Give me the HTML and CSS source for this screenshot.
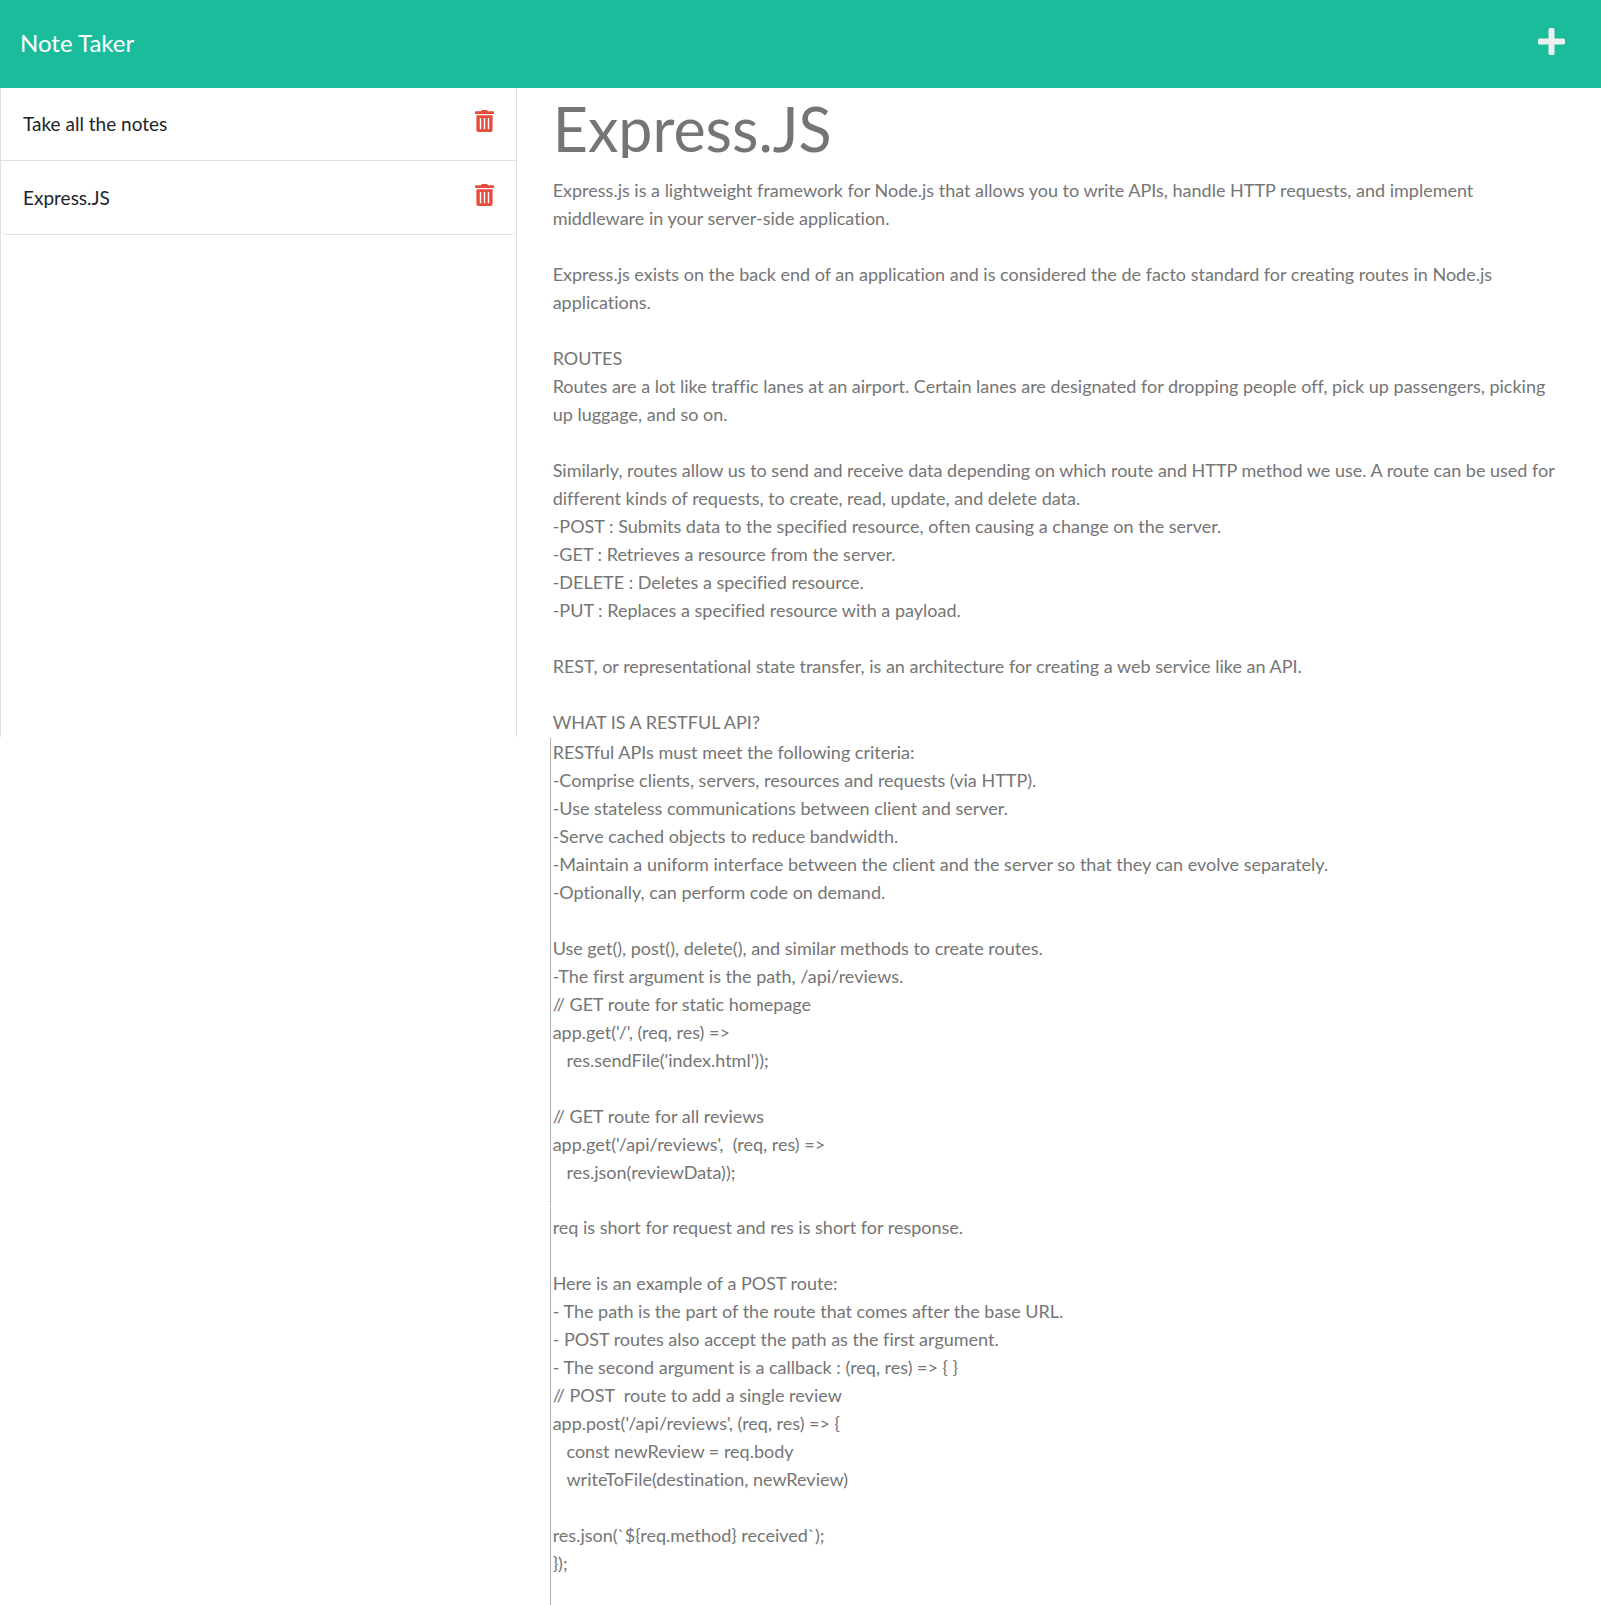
FILE: index.html
```html
<!DOCTYPE html>
<html lang="en">
<head>
  <meta charset="utf-8">
  <meta name="viewport" content="width=device-width, initial-scale=1">
  <title>Note Taker</title>
  <link rel="stylesheet" href="styles.css">
</head>
<body>
  <nav class="navbar">
    <a class="brand" href="#">Note Taker</a>
    <button class="icon-button new-note" type="button" aria-label="New note">
      <svg width="27" height="27" viewBox="0 0 27 27" fill="currentColor" aria-hidden="true">
        <path d="M12 0h3a1.500 1.500 0 0 1 1.500 1.500V10.500H25.500A1.500 1.500 0 0 1 27 12v3a1.500 1.500 0 0 1-1.500 1.500H16.500V25.500A1.500 1.500 0 0 1 15 27h-3a1.500 1.500 0 0 1-1.500-1.500V16.500H1.500A1.500 1.500 0 0 1 0 15v-3a1.500 1.500 0 0 1 1.500-1.500H10.500V1.500A1.500 1.500 0 0 1 12 0z"/>
      </svg>
    </button>
  </nav>

  <main class="layout">
    <aside class="sidebar">
      <ul class="note-list">
        <li class="note-item">
          <span>Take all the notes</span>
          <button class="icon-button delete-note" type="button" aria-label="Delete Take all the notes">
            <svg width="19" height="22" viewBox="0 0 19 22" fill="currentColor" aria-hidden="true">
              <path fill-rule="evenodd" d="M0.600 1.200H5.800L6.500 0.400Q6.800 0 7.300 0H11.700Q12.200 0 12.500 0.400L13.200 1.200H18.400Q19 1.200 19 1.800V3.400Q19 4 18.400 4H0.600Q0 4 0 3.400V1.800Q0 1.200 0.600 1.200zM1.400 5.200H17.600V20Q17.600 22 15.600 22H3.400Q1.400 22 1.400 20zM4.800 8V19.200H6.200V8zM8.800 8V19.200H10.200V8zM12.800 8V19.200H14.200V8z"/>
            </svg>
          </button>
        </li>
        <li class="note-item">
          <span>Express.JS</span>
          <button class="icon-button delete-note" type="button" aria-label="Delete Express.JS">
            <svg width="19" height="22" viewBox="0 0 19 22" fill="currentColor" aria-hidden="true">
              <path fill-rule="evenodd" d="M0.600 1.200H5.800L6.500 0.400Q6.800 0 7.300 0H11.700Q12.200 0 12.500 0.400L13.200 1.200H18.400Q19 1.200 19 1.800V3.400Q19 4 18.400 4H0.600Q0 4 0 3.400V1.800Q0 1.200 0.600 1.200zM1.400 5.200H17.600V20Q17.600 22 15.600 22H3.400Q1.400 22 1.400 20zM4.800 8V19.200H6.200V8zM8.800 8V19.200H10.200V8zM12.800 8V19.200H14.200V8z"/>
            </svg>
          </button>
        </li>
      </ul>
    </aside>

    <section class="note">
      <input class="note-title" type="text" value="Express.JS" aria-label="Note title" readonly>
      <textarea class="note-text" rows="20" aria-label="Note text" readonly>Express.js is a lightweight framework for Node.js that allows you to write APIs, handle HTTP requests, and implement middleware in your server-side application.

Express.js exists on the back end of an application and is considered the de facto standard for creating routes in Node.js applications.

ROUTES
Routes are a lot like traffic lanes at an airport. Certain lanes are designated for dropping people off, pick up passengers, picking up luggage, and so on.

Similarly, routes allow us to send and receive data depending on which route and HTTP method we use. A route can be used for different kinds of requests, to create, read, update, and delete data.
-POST : Submits data to the specified resource, often causing a change on the server.
-GET : Retrieves a resource from the server.
-DELETE : Deletes a specified resource.
-PUT : Replaces a specified resource with a payload.

REST, or representational state transfer, is an architecture for creating a web service like an API.

WHAT IS A RESTFUL API?</textarea>
    </section>

    <section class="note note-more">
      <textarea class="note-text ruled" rows="16" aria-label="Note text, RESTful APIs" readonly>RESTful APIs must meet the following criteria:
-Comprise clients, servers, resources and requests (via HTTP).
-Use stateless communications between client and server.
-Serve cached objects to reduce bandwidth.
-Maintain a uniform interface between the client and the server so that they can evolve separately.
-Optionally, can perform code on demand.

Use get(), post(), delete(), and similar methods to create routes.
-The first argument is the path, /api/reviews.
// GET route for static homepage
app.get('/', (req, res) =>
   res.sendFile('index.html'));

// GET route for all reviews
app.get('/api/reviews',  (req, res) =>
   res.json(reviewData));</textarea>
      <textarea class="note-text ruled last" rows="13" aria-label="Note text, POST routes" readonly>req is short for request and res is short for response.

Here is an example of a POST route:
- The path is the part of the route that comes after the base URL.
- POST routes also accept the path as the first argument.
- The second argument is a callback : (req, res) =&gt; { }
// POST  route to add a single review
app.post('/api/reviews', (req, res) =&gt; {
   const newReview = req.body
   writeToFile(destination, newReview)

res.json(`${req.method} received`);
});</textarea>
    </section>
  </main>
</body>
</html>
```
FILE: styles.css
```css
* {
  box-sizing: border-box;
}

body {
  margin: 0;
  min-height: 100vh;
  display: flex;
  flex-direction: column;
  background: #fff;
  color: #212529;
  font-family: Lato, "Open Sans", sans-serif;
  font-size: 19px;
  line-height: 28px;
  font-variant-ligatures: no-common-ligatures;
}

.navbar {
  display: flex;
  align-items: center;
  justify-content: space-between;
  padding: 27px 36px 33px 20px;
  background: #1abc9c;
}

.brand {
  padding-top: 4px;
  color: #fff;
  font-size: 24px;
  line-height: 24px;
  text-decoration: none;
}

.icon-button {
  display: block;
  padding: 0;
  border: 0;
  background: none;
  cursor: pointer;
}

.icon-button svg {
  display: block;
}

.new-note {
  height: 28px;
  color: #ecf0f1;
}

.delete-note {
  color: #e74c3c;
}

.layout {
  flex: 1;
  display: grid;
  grid-template-columns: minmax(0, 1fr) minmax(0, 2fr);
  grid-template-rows: auto 1fr;
  row-gap: 1px;
}

.sidebar {
  margin-right: 17px;
  border: solid #dfdfdf;
  border-width: 0 1px;
}

.note-list {
  margin: 0;
  padding: 0;
  list-style: none;
}

.note-item {
  display: flex;
  align-items: flex-start;
  justify-content: space-between;
  padding: 22px;
  border-bottom: 1px solid #dfdfdf;
}

.note-item + .note-item {
  padding-top: 23px;
}

.note-item:last-child {
  border-radius: 0 0 5px 5px;
}

.note {
  display: flex;
  flex-direction: column;
  gap: 18px;
  padding: 10px 42px 1px 16px;
}

.note-title,
.note-text {
  display: block;
  width: 100%;
  margin: 0;
  padding: 0 0 0 3px;
  border: 0;
  outline: 0;
  background: transparent;
  color: #757575;
  font-family: inherit;
  font-variant-ligatures: inherit;
}

.note-title {
  height: 60px;
  font-size: 61px;
  line-height: 60px;
}

.note-text {
  overflow: hidden;
  resize: none;
  font-size: 18px;
  line-height: 28px;
}

.note-more {
  grid-column: 2;
  gap: 1px;
  padding-top: 0;
  padding-bottom: 0;
}

.ruled {
  padding: 0 0 20px 2px;
  border-left: 1px solid #b0b0b0;
}

.last {
  flex: 1;
  padding-top: 6px;
}
```
